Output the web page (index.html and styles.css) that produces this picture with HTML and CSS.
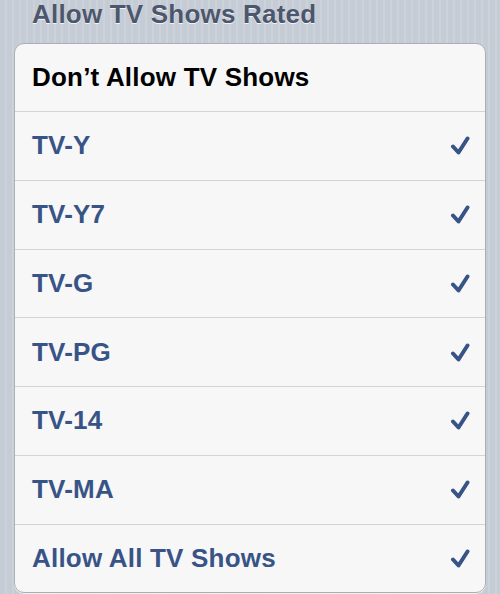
FILE: index.html
```html
<!DOCTYPE html>
<html lang="en">
<head>
    <meta charset="UTF-8">
    <meta name="viewport" content="width=device-width, initial-scale=1.0">
    <title>Allow TV Shows Rated</title>
    <link rel="stylesheet" href="styles.css">
</head>
<body>
    <div class="page">
        <h2 class="groupHeader">Allow TV Shows Rated</h2>
        <ul class="group">
            <li class="row row-off">Don’t Allow TV Shows</li>
            <li class="row">TV-Y <svg class="check" viewBox="0 0 20 21"><path d="M3 11.5 L8.5 17.5 L17.5 3.5"/></svg></li>
            <li class="row">TV-Y7 <svg class="check" viewBox="0 0 20 21"><path d="M3 11.5 L8.5 17.5 L17.5 3.5"/></svg></li>
            <li class="row">TV-G <svg class="check" viewBox="0 0 20 21"><path d="M3 11.5 L8.5 17.5 L17.5 3.5"/></svg></li>
            <li class="row">TV-PG <svg class="check" viewBox="0 0 20 21"><path d="M3 11.5 L8.5 17.5 L17.5 3.5"/></svg></li>
            <li class="row">TV-14 <svg class="check" viewBox="0 0 20 21"><path d="M3 11.5 L8.5 17.5 L17.5 3.5"/></svg></li>
            <li class="row">TV-MA <svg class="check" viewBox="0 0 20 21"><path d="M3 11.5 L8.5 17.5 L17.5 3.5"/></svg></li>
            <li class="row">Allow All TV Shows <svg class="check" viewBox="0 0 20 21"><path d="M3 11.5 L8.5 17.5 L17.5 3.5"/></svg></li>
        </ul>
    </div>
</body>
</html>
```

FILE: styles.css
```css
html, body {
    margin: 0;
    padding: 0;
}

body {
    font-family: "Liberation Sans", Arial, sans-serif;
    background-color: #c6ccd5;
    background-image: repeating-linear-gradient(90deg, #c6ccd5 0, #c6ccd5 5px, #ccd2da 5px, #ccd2da 7px);
    height: 594px;
    overflow: hidden;
}

.page {
    padding: 0 14px 0 14px;
}

.groupHeader {
    margin: 0;
    padding: 0 0 0 18px;
    font-size: 26px;
    line-height: 28px;
    letter-spacing: 0.2px;
    font-weight: bold;
    color: #4c566c;
    text-shadow: 0 1px 0 rgba(255, 255, 255, 0.8);
}

.group {
    list-style: none;
    margin: 15px 0 0 0;
    padding: 0;
    background-color: #f7f7f7;
    border: 1px solid #abaeb2;
    border-radius: 10px;
    box-shadow: 0 1px 0 rgba(255, 255, 255, 0.7);
    overflow: hidden;
}

.row {
    display: flex;
    align-items: center;
    justify-content: space-between;
    height: 67.75px;
    padding: 0 15px 0 17px;
    border-top: 1px solid #d3d3d3;
    font-size: 26px;
    letter-spacing: 0.2px;
    font-weight: bold;
    color: #385487;
}

.row:first-child {
    height: 67px;
    border-top: none;
}

.row-off {
    color: #000;
}

.check {
    width: 20px;
    height: 21px;
    fill: none;
    stroke: #385487;
    stroke-width: 4;
    stroke-linecap: round;
    stroke-linejoin: round;
}
```
